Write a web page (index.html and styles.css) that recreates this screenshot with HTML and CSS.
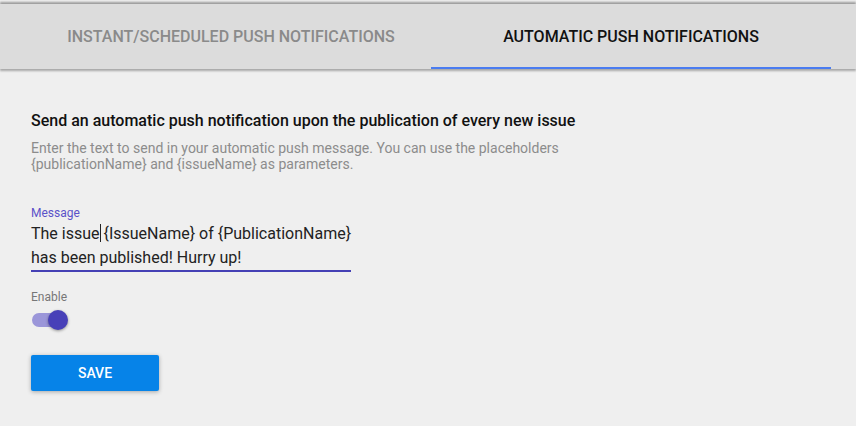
FILE: index.html
```html
<!DOCTYPE html>
<html lang="en">
<head>
  <meta charset="UTF-8" />
  <meta name="viewport" content="width=device-width, initial-scale=1.0"/>
  <title>Push Notifications</title>
  <link rel="stylesheet" href="styles.css">
</head>
<body>
  <div class="tabs">
    <div class="tab">Instant/Scheduled Push Notifications</div>
    <div class="tab is-active">Automatic Push Notifications</div>
  </div>

  <div class="panel">
    <h2 class="title">Send an automatic push notification upon the publication of every new issue</h2>
    <p class="hint">Enter the text to send in your automatic push message. You can use the placeholders<br>{publicationName} and {issueName} as parameters.</p>

    <div class="field">
      <label class="field-label">Message</label>
      <div class="field-input">The issue<span class="caret"></span> {IssueName} of {PublicationName}<br>has been published! Hurry up!</div>
    </div>

    <div class="toggle-row">
      <div class="toggle-label">Enable</div>
      <div class="switch"><span class="track"></span><span class="thumb"></span></div>
    </div>

    <button class="btn-save">Save</button>
  </div>
</body>
</html>
```

FILE: styles.css
```css
* {
  margin: 0; padding: 0; box-sizing: border-box;
}
body {
  font-family: 'Roboto', 'Liberation Sans', sans-serif;
  background: #efefef;
  color: #222;
  width: 856px;
  height: 426px;
  overflow: hidden;
  padding-top: 4px;
}
.tabs {
  display: flex;
  padding: 0 25px 0 31px;
  height: 65px;
  background: #dcdcdc;
  box-shadow: 0 -2px 2px rgba(0, 0, 0, 0.35), 0 2px 2px rgba(0, 0, 0, 0.3);
}
.tab {
  width: 400px;
  display: flex;
  align-items: center;
  justify-content: center;
  text-transform: uppercase;
  font-size: 16px;
  font-weight: 500;
  color: #8a8a8a;
  border-bottom: 2px solid transparent;
  padding-top: 1px;
}
.tab.is-active {
  color: #111;
  border-bottom-color: #4a7cf0;
}
.panel {
  padding: 42px 31px 0;
}
.title {
  font-size: 16px;
  font-weight: 500;
  color: #111;
  line-height: 20px;
}
.hint {
  margin-top: 9px;
  font-size: 14px;
  color: #8c8c8c;
  line-height: 16px;
}
.field {
  margin-top: 34px;
  width: 320px;
}
.field-label {
  display: block;
  font-size: 12px;
  color: #5b52c9;
  line-height: 14px;
  margin-bottom: 2px;
}
.field-input {
  font-size: 16px;
  line-height: 24px;
  color: #222;
  white-space: nowrap;
  border-bottom: 2px solid #4540b5;
}
.caret {
  display: inline-block;
  width: 1px;
  height: 18px;
  margin-right: -1px;
  background: #222;
  vertical-align: -3px;
}
.toggle-row {
  margin-top: 18px;
}
.toggle-label {
  font-size: 12px;
  color: #777;
  line-height: 14px;
}
.switch {
  position: relative;
  width: 38px;
  height: 24px;
  margin-top: 4px;
}
.track {
  position: absolute;
  left: 1px;
  top: 5px;
  width: 34px;
  height: 14px;
  border-radius: 7px;
  background: #9b96d9;
}
.thumb {
  position: absolute;
  left: 17px;
  top: 2px;
  width: 20px;
  height: 20px;
  border-radius: 50%;
  background: #4840b8;
  box-shadow: 0 1px 3px rgba(0, 0, 0, 0.4);
}
.btn-save {
  margin-top: 23px;
  width: 128px;
  height: 36px;
  border: 0;
  border-radius: 2px;
  background: #0683e8;
  color: #fff;
  font-family: inherit;
  font-size: 14px;
  font-weight: 500;
  text-transform: uppercase;
  box-shadow: 0 1px 4px rgba(0, 0, 0, 0.3);
}
```
